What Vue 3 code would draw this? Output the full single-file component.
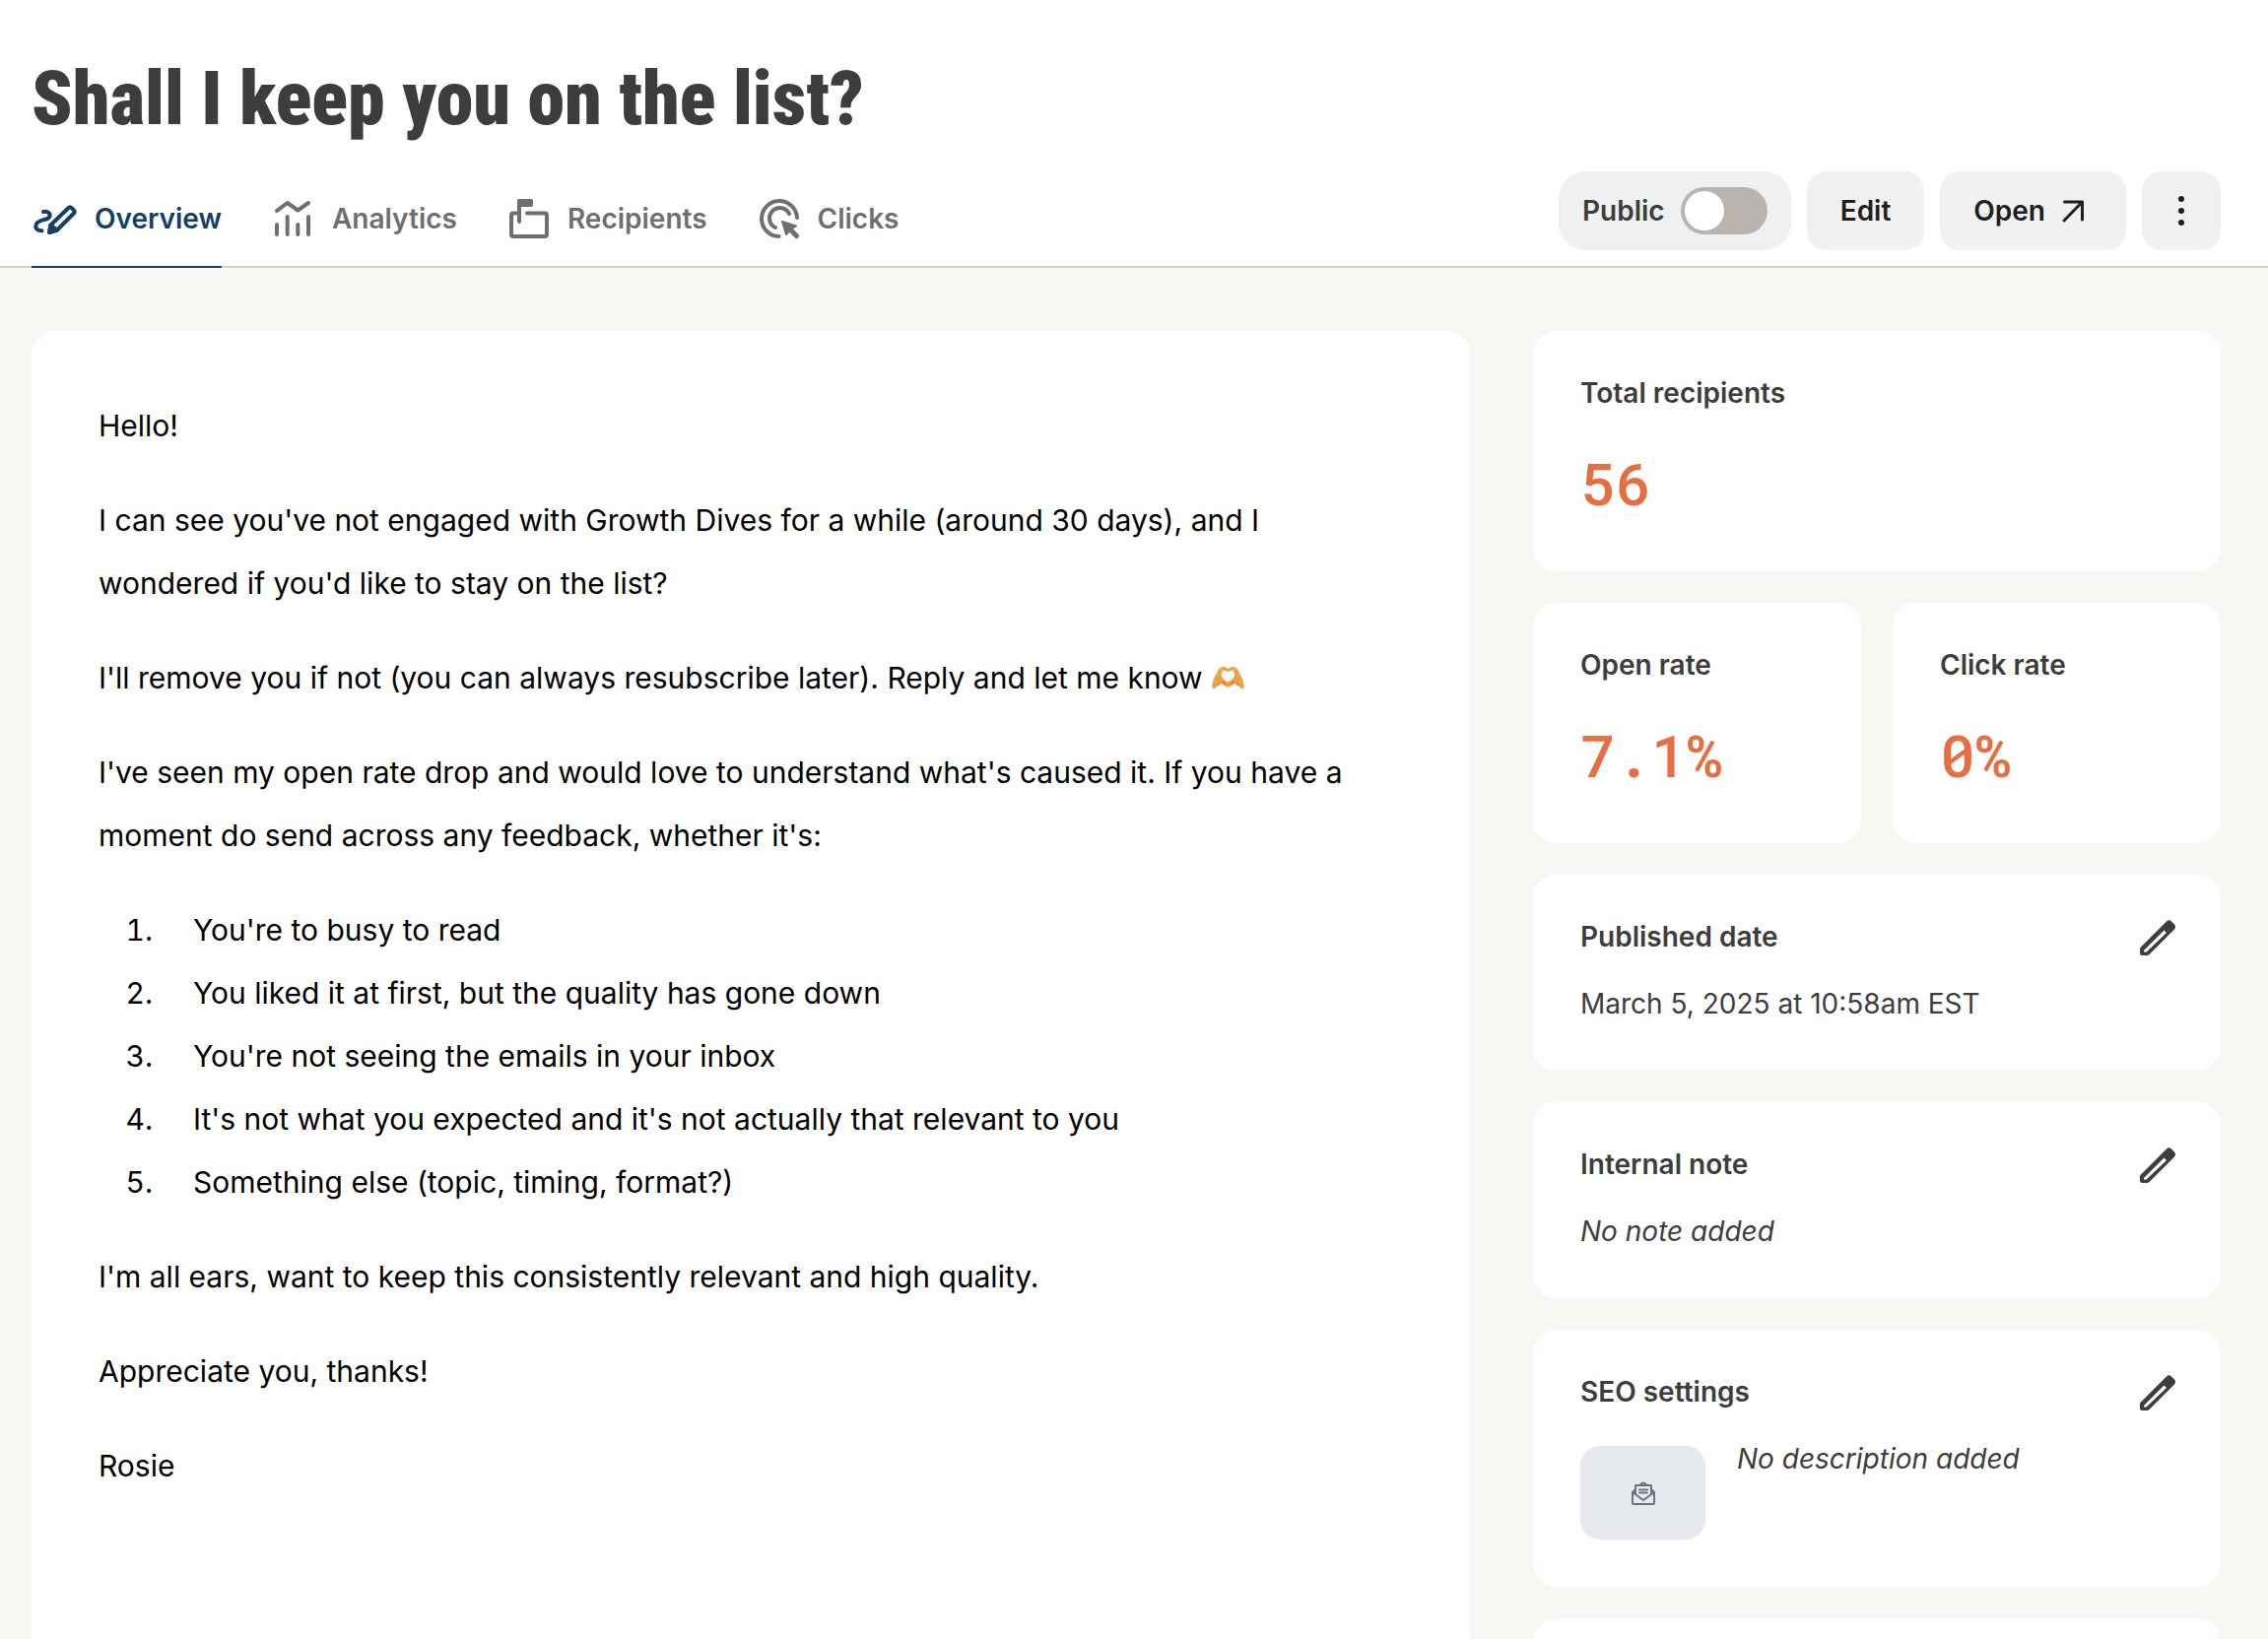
<script setup>
import { ref } from 'vue'

const isPublic = ref(false)

const tabs = [
  { id: 'overview', label: 'Overview' },
  { id: 'analytics', label: 'Analytics' },
  { id: 'recipients', label: 'Recipients' },
  { id: 'clicks', label: 'Clicks' },
]
const activeTab = ref('overview')

const reasons = [
  "You're to busy to read",
  'You liked it at first, but the quality has gone down',
  "You're not seeing the emails in your inbox",
  "It's not what you expected and it's not actually that relevant to you",
  'Something else (topic, timing, format?)',
]

const details = [
  { title: 'Published date', text: 'March 5, 2025 at 10:58am EST', empty: false },
  { title: 'Internal note', text: 'No note added', empty: true },
]

const pencil =
  'M33 8.5Q35.5 6 38 8.5L41 11.5Q43 14 41 16.5L15.5 42Q14.5 43 13 43H8.5Q6 43 6 40.5V36.5Q6 35.5 7 34.5ZM30.5 17.5L10 38V39.5H12.5L33 20Z'
</script>

<template>
  <div class="page">
    <header class="header">
      <h1 class="title">Shall I keep you on the list?</h1>
      <div class="bar">
        <nav class="tabs">
          <a
            v-for="tab in tabs"
            :key="tab.id"
            href="#"
            class="tab"
            :class="{ active: tab.id === activeTab }"
            @click.prevent="activeTab = tab.id"
          >
            <svg class="tab-icon" viewBox="0 0 48 48" fill="none" stroke="currentColor" stroke-width="4" stroke-linecap="round" stroke-linejoin="round" aria-hidden="true">
              <g v-if="tab.id === 'overview'">
                <path d="M12 17C17 16 20 19.5 18 22.5C15.5 26 6 24.5 4.5 30.5C3.5 34 6.500 36.5 10.5 36.3" />
                <path d="M19.5 30.5L37.3 13.2Q39 11.5 40.7 13.2L43 15.5Q44.5 17 43 18.5L26 35.5L18 38Z" />
                <path d="M19.5 30.5L18 38L26 35.5Z" fill="currentColor" />
              </g>
              <g v-else-if="tab.id === 'analytics'">
                <path d="M8 16L18.7 8L29.3 15.5L40 8M8 30V40M18.7 22V40M29.3 30V40M40 22V40" />
              </g>
              <g v-else-if="tab.id === 'recipients'">
                <path d="M12 18.5H9Q7 18.5 7 20.5V40Q7 42 9 42H41Q43 42 43 40V20.5Q43 18.5 41 18.5H23" />
                <path d="M15 27V6" />
                <path d="M15 6H27V10H15Z" fill="currentColor" />
              </g>
              <g v-else>
                <path d="M43 23A18 18 0 1 0 24.5 42" />
                <path d="M35 19A10.5 10.5 0 1 0 21 33" />
                <path d="M28 27L42 31.5L36.5 35L32 40Z" fill="currentColor" stroke-width="2" />
                <path d="M34 33L42.5 41.5" stroke-width="5" />
              </g>
            </svg>
            <span>{{ tab.label }}</span>
          </a>
        </nav>
        <div class="actions">
          <label class="public">
            <span>Public</span>
            <input v-model="isPublic" type="checkbox" role="switch" class="switch" />
          </label>
          <button type="button" class="btn">Edit</button>
          <button type="button" class="btn">
            Open
            <svg class="arrow" viewBox="0 0 24 24" fill="none" stroke="currentColor" stroke-width="3" stroke-linecap="round" stroke-linejoin="round" aria-hidden="true">
              <path d="M3.5 3H21.5V21M21 3.5L3 22" />
            </svg>
          </button>
          <button type="button" class="btn square" aria-label="More options">
            <svg class="dots" viewBox="0 0 8 32" fill="currentColor" aria-hidden="true">
              <circle cx="4" cy="4" r="3" /><circle cx="4" cy="16" r="3" /><circle cx="4" cy="28" r="3" />
            </svg>
          </button>
        </div>
      </div>
    </header>

    <main class="content">
      <article class="card email">
        <p>Hello!</p>
        <p>I can see you've not engaged with Growth Dives for a while (around 30 days), and I wondered if you'd like to stay on the list?</p>
        <p>
          I'll remove you if not (you can always resubscribe later). Reply and let me know
          <svg class="hands" viewBox="0 0 32 24" role="img" aria-label="Heart hands">
            <path d="M15.500 3C13 0 8.500 0 6.500 4L2.500 12L1 18.500Q1 21 4 20.500L6 17.500L9.500 16L15.500 19.500L21.500 16L25 17.500L27 20.500Q30 21 30 18.500L28.500 12L24.500 4C22.500 0 18 0 15.500 3ZM15.500 6C18 2.500 22 4.500 21.500 8.500C21 11.500 18 13.500 15.500 14.500C13 13.500 10 11.500 9.500 8.500C9 4.500 13 2.500 15.500 6Z" fill="#eba042" fill-rule="evenodd" />
            <path d="M10 14L14 17.500M21 14L17 17.500M8 16L6 18M23 16L25 18" stroke="#e0703c" stroke-width="1" fill="none" />
            <path d="M9 3L11 4M20 4L22 3M6 8L7 9M24 9L25 8M4 14L5 15M26 15L27 14" stroke="#d9cfc4" stroke-width="1" />
          </svg>
        </p>
        <p>I've seen my open rate drop and would love to understand what's caused it. If you have a moment do send across any feedback, whether it's:</p>
        <ol>
          <li v-for="reason in reasons" :key="reason">{{ reason }}</li>
        </ol>
        <p>I'm all ears, want to keep this consistently relevant and high quality.</p>
        <p>Appreciate you, thanks!</p>
        <p>Rosie</p>
      </article>

      <aside class="side">
        <section class="card stat">
          <h2>Total recipients</h2>
          <p class="figure">56</p>
        </section>
        <div class="pair">
          <section class="card stat">
            <h2>Open rate</h2>
            <p class="figure">7.1%</p>
          </section>
          <section class="card stat">
            <h2>Click rate</h2>
            <p class="figure">0%</p>
          </section>
        </div>
        <section v-for="item in details" :key="item.title" class="card stat">
          <div class="head">
            <h2>{{ item.title }}</h2>
            <button type="button" class="edit" :aria-label="'Edit ' + item.title">
              <svg viewBox="0 0 48 48" fill="currentColor" aria-hidden="true"><path :d="pencil" fill-rule="evenodd" /></svg>
            </button>
          </div>
          <p class="value" :class="{ empty: item.empty }">{{ item.text }}</p>
        </section>
        <section class="card stat">
          <div class="head">
            <h2>SEO settings</h2>
            <button type="button" class="edit" aria-label="Edit SEO settings">
              <svg viewBox="0 0 48 48" fill="currentColor" aria-hidden="true"><path :d="pencil" fill-rule="evenodd" /></svg>
            </button>
          </div>
          <div class="seo">
            <div class="thumb">
              <svg viewBox="0 0 24 24" fill="none" stroke="currentColor" stroke-width="2" stroke-linejoin="round" stroke-linecap="round" aria-hidden="true">
                <path d="M4 8L1 11V22Q1 23 2 23H22Q23 23 23 22V11L20 8M1 11L12 19L23 11M4 13V4.5Q4 4 4.5 4H19.5Q20 4 20 4.5V13M8.5 4Q12 -1 15.5 4M8 8.500H16M8 11.500H16" />
              </svg>
            </div>
            <p class="value empty">No description added</p>
          </div>
        </section>
        <section class="card stat"></section>
      </aside>
    </main>
  </div>
</template>

<style>
html,
body {
  height: 100%;
  overflow: hidden;
  background: #f8f7f3;
}
</style>

<style scoped>
.page {
  font-family: Inter, "Liberation Sans", sans-serif;
  color: #3d3d3d;
}
h1,
h2,
p,
ol {
  margin: 0;
}
.header {
  background: #fff;
  border-bottom: 2px solid #d1d1d1;
}
.title {
  padding: 52px 32px 0;
  font-family: "Roboto Condensed", "Open Sans Condensed", "Liberation Sans Narrow", Roboto, sans-serif;
  font-size: 76px;
  line-height: 96px;
  font-weight: 900;
}
.bar {
  display: flex;
  justify-content: space-between;
  align-items: flex-end;
  padding: 26px 48px 0 32px;
}
.tabs {
  display: flex;
  gap: 48px;
}
.tab {
  display: flex;
  align-items: center;
  gap: 16px;
  height: 96px;
  margin-bottom: -2px;
  border-bottom: 2px solid transparent;
  font-size: 28px;
  font-weight: 600;
  color: #6f6f6f;
  text-decoration: none;
}
.tab.active {
  color: #144066;
  border-bottom-color: #144066;
}
.tab-icon {
  width: 48px;
  height: 48px;
}
.actions {
  display: flex;
  gap: 16px;
  padding-bottom: 16px;
}
.public,
.btn {
  display: flex;
  align-items: center;
  justify-content: center;
  height: 80px;
  font-size: 28px;
  font-weight: 600;
}
.public {
  gap: 16px;
  padding: 0 24px;
  border-radius: 28px;
  background: #eff0f2;
}
.switch {
  appearance: none;
  display: flex;
  width: 88px;
  height: 48px;
  margin: 0;
  padding: 4px;
  box-sizing: border-box;
  border-radius: 24px;
  background: #bab4b1;
}
.switch::before {
  content: "";
  width: 40px;
  height: 40px;
  border-radius: 50%;
  background: #fff;
}
.switch:checked {
  justify-content: flex-end;
  background: #144066;
}
.btn {
  gap: 16px;
  padding: 0 34px;
  border: 0;
  border-radius: 20px;
  background: #f1f1f1;
  color: #1f1f1c;
  font-family: inherit;
}
.arrow {
  width: 24px;
  height: 24px;
  margin-right: 8px;
}
.square {
  width: 80px;
  padding: 0;
}
.dots {
  width: 8px;
  height: 32px;
}
.content {
  display: grid;
  grid-template-columns: minmax(0, 1fr) 698px;
  gap: 64px;
  padding: 64px 48px 0 32px;
}
.card {
  background: #fff;
  border-radius: 24px;
}
.email {
  display: flex;
  flex-direction: column;
  gap: 32px;
  padding: 64px 80px 64px 68px;
  font-size: 30px;
  line-height: 64px;
  color: #000;
}
.hands {
  width: 36px;
  height: 27px;
  vertical-align: -4px;
}
ol {
  padding: 0;
  list-style: none;
  counter-reset: reason;
}
li {
  display: flex;
  gap: 41px;
}
li::before {
  counter-increment: reason;
  content: counter(reason) ".";
  width: 55px;
  text-align: right;
  font-variant-numeric: tabular-nums;
}
.side {
  display: flex;
  flex-direction: column;
  gap: 32px;
}
.pair {
  display: grid;
  grid-template-columns: 1fr 1fr;
  gap: 32px;
}
.stat {
  display: flex;
  flex-direction: column;
  gap: 32px;
  padding: 47px 48px 48px;
}
h2 {
  font-size: 28px;
  line-height: 32px;
  font-weight: 600;
}
.figure {
  font-family: "Roboto Mono", "DejaVu Sans Mono", monospace;
  font-size: 60px;
  line-height: 85px;
  font-weight: 500;
  color: #e66e40;
}
.head {
  display: flex;
  justify-content: space-between;
  align-items: center;
}
.edit {
  width: 48px;
  height: 48px;
  margin: -8px;
  padding: 0;
  border: 0;
  background: none;
  color: #3d3d3d;
}
.edit svg {
  display: block;
}
.value {
  font-size: 28px;
  line-height: 40px;
}
.empty {
  font-style: italic;
}
.seo {
  display: flex;
  gap: 32px;
}
.thumb {
  display: flex;
  align-items: center;
  justify-content: center;
  width: 127px;
  height: 95px;
  margin-top: 7px;
  border-radius: 20px;
  background: #e6e9ee;
  color: #6c7378;
}
.thumb svg {
  width: 24px;
  height: 24px;
}
</style>
